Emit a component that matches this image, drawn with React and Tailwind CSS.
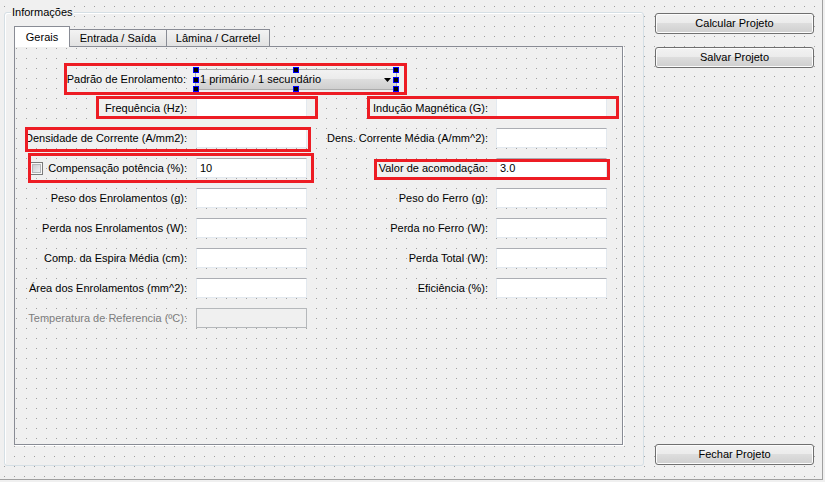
import React from 'react'

// dot grid, as Qt Designer paints it behind the form
const PAGE_BG =
  'bg-[#f0f0f0] bg-[image:linear-gradient(to_bottom,transparent_1px,#f0f0f0_1px),linear-gradient(to_right,#a0a0a0_1px,transparent_1px)] bg-size-[10px_10px] bg-position-[4px_6px]'
const PANE_BG =
  'bg-[#f0f0f0] bg-[image:linear-gradient(to_bottom,transparent_1px,#f0f0f0_1px),linear-gradient(to_right,#a0a0a0_1px,transparent_1px)] bg-size-[10px_10px] bg-position-[1px_1px]'
const BTN =
  'h-[21px] w-[159px] rounded-[3px] border border-[#707070] bg-[image:linear-gradient(#f2f2f2_0%,#ebebeb_50%,#dddddd_50%,#cfcfcf_100%)] shadow-[inset_0_0_0_1px_#fcfcfc] flex items-center justify-center text-black'

const rows = [
  { left: 'Frequência (Hz):', right: 'Indução Magnética (G):' },
  { left: 'Densidade de Corrente (A/mm2):', right: 'Dens. Corrente Média (A/mm^2):' },
  { left: 'Compensação potência (%):', leftValue: '10', check: true, right: 'Valor de acomodação:', rightValue: '3.0' },
  { left: 'Peso dos Enrolamentos (g):', right: 'Peso do Ferro (g):' },
  { left: 'Perda nos Enrolamentos (W):', right: 'Perda no Ferro (W):' },
  { left: 'Comp. da Espira Média (cm):', right: 'Perda Total (W):' },
  { left: 'Área dos Enrolamentos (mm^2):', right: 'Eficiência (%):' },
  { left: 'Temperatura de Referencia (ºC):', disabled: true },
]

function Field({ value, disabled }) {
  return (
    <div
      className={`h-[20px] w-[111px] border px-[3px] leading-[18px] whitespace-nowrap ${
        disabled ? 'bg-[#f0f0f0] border-[#b5b8bb]' : 'bg-white border-[#e3e9ef] border-t-[#abadb3]'
      }`}
    >
      {value}
    </div>
  )
}

function CheckBox() {
  return (
    <div className="shrink-0 mr-[5px] w-[13px] h-[13px] border border-[#7a7a7a] bg-[#f8f8f8] p-px">
      <div className="w-[9px] h-[9px] border border-[#b4b7ba] bg-[image:linear-gradient(135deg,#c9cdd1,#eef0f2)]" />
    </div>
  )
}

function Handle({ className }) {
  return <div className={`absolute w-[6px] h-[6px] bg-black border border-[#0000ff] ${className}`} />
}

function Mark({ className }) {
  return <div className={`pointer-events-none absolute border-[3px] border-[#ed1c24] ${className}`} />
}

export default function App() {
  return (
    <div className="w-[825px] h-[482px] bg-[#f0f0f0] overflow-hidden font-['Liberation_Sans',Arial,sans-serif] text-[11px] text-black">
      <div className={`w-[823px] h-[480px] border-r border-b border-[#a0a0a0] flex pl-[4px] pt-[12px] ${PAGE_BG}`}>
        {/* Informações */}
        <div className="relative w-[640px] h-[454px] rounded-[3px] border border-[#d5dfe5] shadow-[inset_1px_1px_0_#ffffff] pl-[9px] pt-[13px]">
          <span className="absolute left-[6px] -top-[7px] px-px bg-[#f0f0f0] leading-[13px]">Informações</span>

          {/* abas */}
          <div className="flex items-end h-[20px] w-[609px]">
            <div className="relative z-10 -mb-px h-[21px] w-[56px] border border-b-0 border-[#898c95] bg-white flex items-center justify-center">
              Gerais
            </div>
            <div className="h-[17px] w-[97px] border-t border-r border-[#898c95] bg-[image:linear-gradient(#f3f3f3,#e2e2e2)] flex items-center justify-center">
              Entrada / Saída
            </div>
            <div className="h-[17px] w-[103px] border-t border-r border-[#898c95] bg-[image:linear-gradient(#f3f3f3,#e2e2e2)] flex items-center justify-center">
              Lâmina / Carretel
            </div>
          </div>

          {/* página Gerais */}
          <div className={`relative w-[609px] h-[399px] border border-[#898c95] shadow-[1px_1px_0_#ffffff] pt-[22px] ${PANE_BG}`}>
            <div className="flex items-center h-[21px]">
              <div className="w-[180px] text-right pr-[9px] whitespace-nowrap">Padrão de Enrolamento:</div>
              <div className="relative w-[202px] h-[21px] rounded-[2px] border border-[#acacac] bg-[image:linear-gradient(#f2f2f2_0%,#ebebeb_50%,#dddddd_50%,#cfcfcf_100%)] flex items-center pl-[4px]">
                <span className="whitespace-nowrap">1 primário / 1 secundário</span>
                <svg className="absolute right-[5px] top-[8px]" width="7" height="4" viewBox="0 0 7 4">
                  <path d="M0 0h7L3.5 4z" fill="#000" />
                </svg>
                <Handle className="-left-[3px] -top-[3px]" />
                <Handle className="left-[97px] -top-[3px]" />
                <Handle className="-right-[3px] -top-[3px]" />
                <Handle className="-left-[3px] top-[7px]" />
                <Handle className="-right-[3px] top-[7px]" />
                <Handle className="-left-[3px] -bottom-[3px]" />
                <Handle className="left-[97px] -bottom-[3px]" />
                <Handle className="-right-[3px] -bottom-[3px]" />
              </div>
            </div>

            <div className="mt-[8px] grid grid-cols-[181px_111px_189px_111px] gap-y-[10px]">
              {rows.map((r) => (
                <React.Fragment key={r.left}>
                  <div
                    className={`h-[20px] flex items-center justify-end pr-[9px] whitespace-nowrap ${
                      r.disabled ? 'text-[#7d7d7d]' : 'text-black'
                    }`}
                  >
                    {r.check && <CheckBox />}
                    {r.left}
                  </div>
                  <Field value={r.leftValue} disabled={r.disabled} />
                  {r.right ? (
                    <>
                      <div className="h-[20px] flex items-center justify-end pr-[8px] whitespace-nowrap">{r.right}</div>
                      <Field value={r.rightValue} />
                    </>
                  ) : (
                    <>
                      <div />
                      <div />
                    </>
                  )}
                </React.Fragment>
              ))}
            </div>

            {/* marcações em vermelho */}
            <Mark className="left-[49px] top-[16px] w-[343px] h-[32px]" />
            <Mark className="left-[81px] top-[49px] w-[222px] h-[23px]" />
            <Mark className="left-[352px] top-[49px] w-[252px] h-[23px]" />
            <Mark className="left-[10px] top-[80px] w-[286px] h-[25px]" />
            <Mark className="left-[13px] top-[106px] w-[286px] h-[30px]" />
            <Mark className="left-[359px] top-[112px] w-[236px] h-[21px]" />
          </div>
        </div>

        {/* botões */}
        <div className="ml-[11px] mt-[1px] flex flex-col">
          <div className={BTN}>Calcular Projeto</div>
          <div className={`mt-[13px] ${BTN}`}>Salvar Projeto</div>
          <div className={`mt-[376px] ${BTN}`}>Fechar Projeto</div>
        </div>
      </div>
    </div>
  )
}
